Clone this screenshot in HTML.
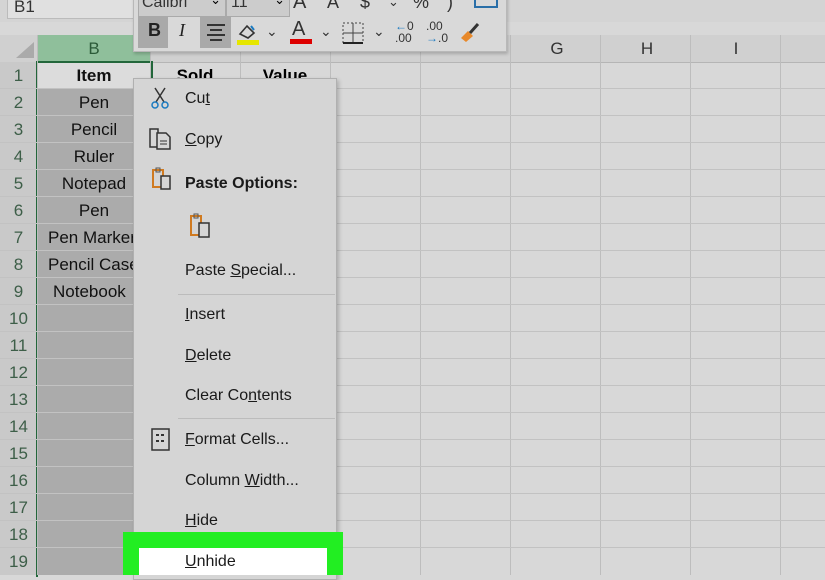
<!DOCTYPE html>
<html><head><style>
body{margin:0;width:825px;height:575px;overflow:hidden;background:#d8d8d8;font-family:"Liberation Sans",sans-serif;position:relative}
.a{position:absolute}
.vl{position:absolute;top:35px;bottom:0;width:1px;background:#bdbdbd}
.hl{position:absolute;left:0;right:0;height:1px;background:#c2c2c2}
.rn{position:absolute;left:0;width:37px;text-align:center;font-size:17px;color:#3d5e48;height:27px;line-height:27px}
.bc{position:absolute;left:38px;width:112px;text-align:center;font-size:17px;color:#111;height:27px;line-height:27px;white-space:nowrap;overflow:hidden}
.mi{position:absolute;left:185px;font-size:16px;color:#1a1a1a}
.sep{position:absolute;left:178px;width:157px;height:1px;background:#bcbcbc}
</style></head><body>
<div class="a" style="left:0;top:0;width:825px;height:22px;background:#d4d4d4"></div>
<div class="a" style="left:7px;top:0;width:126px;height:18px;background:#e0e0e0;border:1px solid #bbb;border-top:none"></div>
<div class="a" style="left:14px;top:-3px;font-size:17px;color:#333">B1</div>
<div class="a" style="left:0;top:35px;width:825px;height:27px;background:#d0d0d0;border-bottom:1px solid #b5b5b5"></div>
<div class="a" style="left:38px;top:35px;width:112px;height:27px;background:#8fbf9b"></div>
<div class="a" style="left:38px;top:35px;width:112px;text-align:center;font-size:17px;line-height:27px;color:#2b5a38">B</div>
<div class="a" style="left:537px;top:35px;width:40px;text-align:center;font-size:17px;line-height:27px;color:#333">G</div>
<div class="a" style="left:627px;top:35px;width:40px;text-align:center;font-size:17px;line-height:27px;color:#333">H</div>
<div class="a" style="left:716px;top:35px;width:40px;text-align:center;font-size:17px;line-height:27px;color:#333">I</div>
<div class="a" style="left:16px;top:42px;width:0;height:0;border-left:18px solid transparent;border-bottom:16px solid #aaa"></div>
<div class="a" style="left:0;top:62px;width:37px;height:513px;background:#c9c9c9"></div>
<div class="a" style="left:38px;top:62px;width:112px;height:513px;background:#ababab"></div>
<div class="a" style="left:38px;top:62px;width:112px;height:26px;background:#dcdcdc"></div>
<div class="a" style="left:36px;top:61px;width:113px;height:514px;border:2px solid #22663a;border-bottom:none"></div>
<div class="vl" style="left:37px"></div><div class="vl" style="left:150px"></div><div class="vl" style="left:240px"></div><div class="vl" style="left:330px"></div><div class="vl" style="left:420px"></div><div class="vl" style="left:510px"></div><div class="vl" style="left:600px"></div><div class="vl" style="left:690px"></div><div class="vl" style="left:780px"></div>
<div class="hl" style="top:88px"></div><div class="hl" style="top:115px"></div><div class="hl" style="top:142px"></div><div class="hl" style="top:169px"></div><div class="hl" style="top:196px"></div><div class="hl" style="top:223px"></div><div class="hl" style="top:250px"></div><div class="hl" style="top:277px"></div><div class="hl" style="top:304px"></div><div class="hl" style="top:331px"></div><div class="hl" style="top:358px"></div><div class="hl" style="top:385px"></div><div class="hl" style="top:412px"></div><div class="hl" style="top:439px"></div><div class="hl" style="top:466px"></div><div class="hl" style="top:493px"></div><div class="hl" style="top:520px"></div><div class="hl" style="top:547px"></div>
<div class="rn" style="top:62px">1</div><div class="rn" style="top:89px">2</div><div class="rn" style="top:116px">3</div><div class="rn" style="top:143px">4</div><div class="rn" style="top:170px">5</div><div class="rn" style="top:197px">6</div><div class="rn" style="top:224px">7</div><div class="rn" style="top:251px">8</div><div class="rn" style="top:278px">9</div><div class="rn" style="top:305px">10</div><div class="rn" style="top:332px">11</div><div class="rn" style="top:359px">12</div><div class="rn" style="top:386px">13</div><div class="rn" style="top:413px">14</div><div class="rn" style="top:440px">15</div><div class="rn" style="top:467px">16</div><div class="rn" style="top:494px">17</div><div class="rn" style="top:521px">18</div><div class="rn" style="top:548px">19</div>
<div class="bc" style="top:62px;font-weight:bold">Item</div>
<div class="bc" style="top:89px">Pen</div><div class="bc" style="top:116px">Pencil</div><div class="bc" style="top:143px">Ruler</div><div class="bc" style="top:170px">Notepad</div><div class="bc" style="top:197px">Pen</div><div class="bc" style="top:224px;text-align:left;padding-left:10px;width:102px">Pen Marker</div><div class="bc" style="top:251px;text-align:left;padding-left:10px;width:102px">Pencil Case</div><div class="bc" style="top:278px;text-align:left;padding-left:15px;width:97px">Notebook</div>
<div class="a" style="left:150px;top:62px;width:90px;text-align:center;font-size:17px;line-height:27px;font-weight:bold">Sold</div>
<div class="a" style="left:240px;top:62px;width:90px;text-align:center;font-size:17px;line-height:27px;font-weight:bold">Value</div>
<!-- toolbar -->
<div class="a" style="left:133px;top:-10px;width:372px;height:60px;background:#d9d9d9;border:1px solid #b8b8b8;box-shadow:1px 2px 3px rgba(0,0,0,.2)"></div>
<div class="a" style="left:138px;top:-5px;width:86px;height:20px;background:#ccc;border:1px solid #aaa;overflow:hidden"><span style="position:absolute;left:3px;top:-2px;font-size:16px;color:#333">Calibri</span><span style="position:absolute;right:4px;top:-4px;font-size:13px">⌄</span></div>
<div class="a" style="left:226px;top:-5px;width:62px;height:20px;background:#ccc;border:1px solid #aaa;overflow:hidden"><span style="position:absolute;left:4px;top:-2px;font-size:16px;color:#333">11</span><span style="position:absolute;right:4px;top:-4px;font-size:13px">⌄</span></div>
<div class="a" style="left:293px;top:-9px;font-size:20px;color:#333">A</div>
<div class="a" style="left:327px;top:-8px;font-size:18px;color:#333">A</div>
<div class="a" style="left:360px;top:-8px;font-size:18px;color:#333">$</div>
<div class="a" style="left:388px;top:-6px;font-size:13px;color:#333">⌄</div>
<div class="a" style="left:413px;top:-8px;font-size:18px;color:#333">%</div>
<div class="a" style="left:447px;top:-8px;font-size:18px;color:#333">)</div>
<div class="a" style="left:474px;top:-4px;width:20px;height:10px;border:2px solid #2a6fa8;border-top:none"></div>
<div class="a" style="left:138px;top:16px;width:30px;height:32px;background:#a9a9a9"></div>
<div class="a" style="left:148px;top:20px;font-size:18px;font-weight:bold;color:#222">B</div>
<div class="a" style="left:179px;top:20px;font-size:18px;font-style:italic;font-family:'Liberation Serif';color:#222">I</div>
<div class="a" style="left:200px;top:16px;width:31px;height:32px;background:#a9a9a9"></div>
<svg class="a" style="left:205px;top:22px" width="22" height="20"><path d="M2 3h18M5 8h12M2 13h18M5 18h12" stroke="#333" stroke-width="2"/></svg>
<svg class="a" style="left:236px;top:20px" width="24" height="26"><path d="M4 14l7-8 7 7-6 5z" fill="none" stroke="#333" stroke-width="1.6"/><path d="M15 6l3 4" stroke="#1a7ac0" stroke-width="2"/><rect x="1" y="20" width="22" height="5" fill="#e6e600"/></svg>
<div class="a" style="left:266px;top:23px;font-size:14px;color:#333">⌄</div>
<div class="a" style="left:292px;top:18px;font-size:20px;color:#333">A</div>
<div class="a" style="left:290px;top:39px;width:22px;height:5px;background:#d00"></div>
<div class="a" style="left:320px;top:23px;font-size:14px;color:#333">⌄</div>
<svg class="a" style="left:342px;top:22px" width="22" height="22"><rect x="1" y="1" width="20" height="20" fill="none" stroke="#444" stroke-dasharray="2 2"/><path d="M11 1v20M1 11h20" stroke="#444"/><path d="M1 21h20" stroke="#222" stroke-width="2"/></svg>
<div class="a" style="left:373px;top:23px;font-size:14px;color:#333">⌄</div>
<div class="a" style="left:395px;top:20px;font-size:12px;line-height:12px;color:#333"><span style="color:#1a7ac0">←</span>0<br>.00</div>
<div class="a" style="left:426px;top:20px;font-size:12px;line-height:12px;color:#333">.00<br><span style="color:#1a7ac0">→</span>.0</div>
<svg class="a" style="left:458px;top:20px" width="24" height="24"><path d="M3 18l7-7 5 5-7 6z" fill="#e8892a"/><path d="M12 13l8-9" stroke="#333" stroke-width="3"/></svg>
<!-- context menu -->
<div class="a" style="left:133px;top:78px;width:202px;height:500px;background:#d5d5d5;border:1px solid #b0b0b0;box-shadow:2px 2px 4px rgba(0,0,0,.2)"></div>
<svg class="a" style="left:151px;top:87px" width="18" height="22"><path d="M4 1l9 14M14 1L5 15" stroke="#333" stroke-width="1.5"/><circle cx="4" cy="18" r="3" fill="none" stroke="#1a7ac0" stroke-width="1.5"/><circle cx="14" cy="18" r="3" fill="none" stroke="#1a7ac0" stroke-width="1.5"/></svg>
<div class="mi" style="top:90px">Cu<u>t</u></div>
<svg class="a" style="left:148px;top:127px" width="26" height="24"><path d="M2 2h8v18H2z" fill="none" stroke="#333" stroke-width="1.5"/><path d="M9 6h9l4 4v12H9z" fill="#d5d5d5" stroke="#333" stroke-width="1.5"/><path d="M12 14h7M12 17h7" stroke="#333"/></svg>
<div class="mi" style="top:131px"><u>C</u>opy</div>
<svg class="a" style="left:151px;top:167px" width="24" height="24"><path d="M2 3h10v17H2z" fill="none" stroke="#d07a20" stroke-width="2"/><rect x="5" y="1" width="4" height="4" fill="none" stroke="#555"/><rect x="10" y="9" width="9" height="13" fill="#d5d5d5" stroke="#333" stroke-width="1.5"/></svg>
<div class="mi" style="top:175px;font-weight:bold">Paste Options:</div>
<svg class="a" style="left:189px;top:213px" width="24" height="26"><path d="M2 3h10v19H2z" fill="none" stroke="#d07a20" stroke-width="2"/><rect x="5" y="1" width="4" height="4" fill="none" stroke="#555"/><rect x="10" y="10" width="10" height="14" fill="#d5d5d5" stroke="#333" stroke-width="1.5"/></svg>
<div class="mi" style="top:262px">Paste <u>S</u>pecial...</div>
<div class="sep" style="top:294px"></div>
<div class="mi" style="top:306px"><u>I</u>nsert</div>
<div class="mi" style="top:347px"><u>D</u>elete</div>
<div class="mi" style="top:387px">Clear Co<u>n</u>tents</div>
<div class="sep" style="top:418px"></div>
<svg class="a" style="left:151px;top:428px" width="20" height="24"><rect x="1" y="1" width="17" height="21" fill="none" stroke="#333" stroke-width="1.5"/><path d="M5 7h3M5 13h3M10 7h3M10 13h3" stroke="#333" stroke-width="2"/></svg>
<div class="mi" style="top:431px"><u>F</u>ormat Cells...</div>
<div class="mi" style="top:472px">Column <u>W</u>idth...</div>
<div class="mi" style="top:512px"><u>H</u>ide</div>
<div class="a" style="left:123px;top:532px;width:220px;height:43px;background:#22ee22"></div>
<div class="a" style="left:139px;top:548px;width:188px;height:27px;background:#fff"></div>
<div class="mi" style="top:553px"><u>U</u>nhide</div>
</body></html>
